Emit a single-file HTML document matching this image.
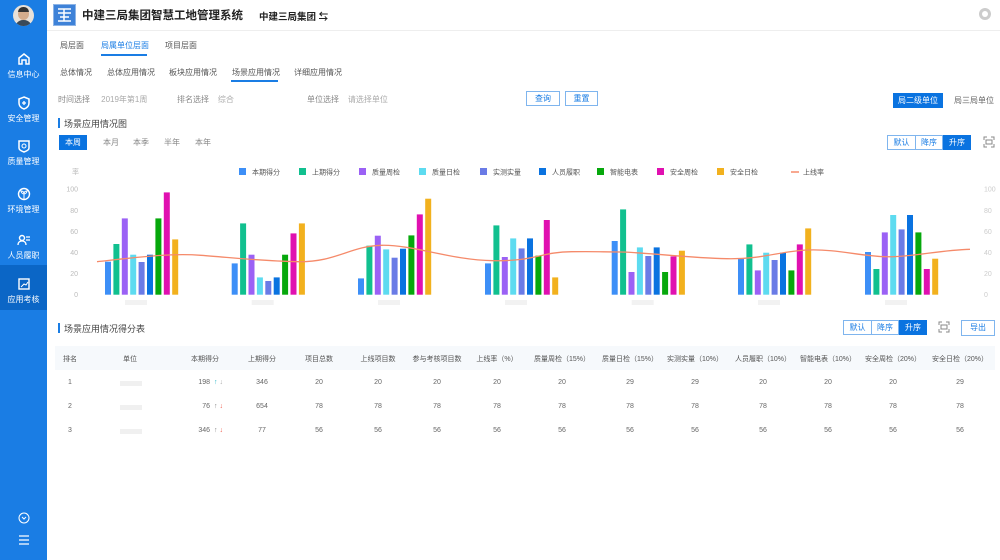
<!DOCTYPE html>
<html><head><meta charset="utf-8"><style>
*{margin:0;padding:0;box-sizing:border-box}
body{width:1000px;height:560px;overflow:hidden;background:#fff;font-family:"Liberation Sans","Noto Sans CJK SC",sans-serif;color:#333;position:relative}
.a{position:absolute;white-space:nowrap}
#side{position:absolute;left:0;top:0;width:47px;height:560px;background:#1a7de4}
.si{position:absolute;left:0;width:47px;text-align:center;color:#fff;font-size:8px}
.si svg{display:block;margin:0 auto 3px}
.t{font-size:8px;color:#555}
.btn{position:absolute;height:15px;border:1px solid #7fb5ee;color:#1a7de4;font-size:8px;text-align:center;line-height:13px;background:#fff}
.on{background:#0a73e0;color:#fff;border-color:#0a73e0}
.h{font-size:7px;color:#555}
.c{font-size:7px;color:#666}
</style></head><body>
<div id="side">
 <div class="a" style="left:13px;top:5px;width:21px;height:21px;border-radius:50%;background:#e8e1d9;overflow:hidden"><div style="position:absolute;left:5px;top:3px;width:11px;height:12px;border-radius:50%;background:#d4ac8c"></div><div style="position:absolute;left:5px;top:2px;width:11px;height:5px;border-radius:5px 5px 0 0;background:#333"></div><div style="position:absolute;left:2px;top:15px;width:17px;height:8px;border-radius:8px 8px 0 0;background:#3a4a5a"></div></div>
 <div class="si" style="top:52px"><svg width="14" height="14" viewBox="0 0 14 14"><path d="M2 6L7 2l5 4v6H9V8H5v4H2z" fill="none" stroke="#fff" stroke-width="1.5"/></svg>信息中心</div>
 <div class="si" style="top:96px"><svg width="14" height="14" viewBox="0 0 14 14"><path d="M7 1l5 2v4c0 3-2 5-5 6-3-1-5-3-5-6V3z" fill="none" stroke="#fff" stroke-width="1.5"/><path d="M7 5v4M5 7h4" stroke="#fff" stroke-width="1.3"/></svg>安全管理</div>
 <div class="si" style="top:139px"><svg width="14" height="14" viewBox="0 0 14 14"><path d="M2 2h10v7c0 2-2 3-5 4-3-1-5-2-5-4z" fill="none" stroke="#fff" stroke-width="1.5"/><circle cx="7" cy="7" r="2" fill="none" stroke="#fff"/></svg>质量管理</div>
 <div class="si" style="top:187px"><svg width="14" height="14" viewBox="0 0 14 14"><circle cx="7" cy="7" r="5.5" fill="none" stroke="#fff" stroke-width="1.4"/><path d="M7 12V6M7 7C5 7 4 5 4 4c2 0 3 1 3 3M7 7c2 0 3-2 3-3-2 0-3 1-3 3" fill="none" stroke="#fff"/></svg>环境管理</div>
 <div class="si" style="top:233px"><svg width="14" height="14" viewBox="0 0 14 14"><circle cx="5" cy="5" r="2.5" fill="none" stroke="#fff" stroke-width="1.4"/><path d="M1 12c0-3 2-4 4-4s4 1 4 4M9 4h4M9 7h4" fill="none" stroke="#fff" stroke-width="1.3"/></svg>人员履职</div>
 <div style="position:absolute;left:0;top:265px;width:47px;height:45px;background:#0b66c6"></div>
 <div class="si" style="top:277px"><svg width="14" height="14" viewBox="0 0 14 14"><rect x="2" y="2" width="10" height="10" fill="none" stroke="#fff" stroke-width="1.4"/><path d="M4 10l3-3 2 1 2-3" fill="none" stroke="#fff"/></svg>应用考核</div>
 <svg class="a" style="left:18px;top:512px" width="12" height="12" viewBox="0 0 12 12"><circle cx="6" cy="6" r="5" fill="none" stroke="#fff"/><path d="M4 5l2 2 2-2" fill="none" stroke="#fff"/></svg>
 <svg class="a" style="left:18px;top:535px" width="12" height="10" viewBox="0 0 12 10"><path d="M1 1h10M1 5h10M1 9h10" stroke="#fff" stroke-width="1.3"/></svg>
</div>
<div class="a" style="left:53px;top:4px;width:23px;height:22px;background:#3e82d8;border:1px solid #8db4e6"><svg width="21" height="20" viewBox="0 0 21 20"><path d="M4 4h13M4 8h13M6 12h9M4 16h13M10 4v12" stroke="#fff" stroke-width="1.5"/></svg></div>
<div class="a" style="left:82px;top:7px;font-size:11.5px;color:#222;font-weight:bold">中建三局集团智慧工地管理系统</div>
<div class="a" style="left:259px;top:9px;font-size:9.5px;color:#222;font-weight:bold">中建三局集团 ⇆</div>
<div class="a" style="left:979px;top:8px;width:12px;height:12px;border-radius:50%;background:#ccc"><div style="margin:3px;width:6px;height:6px;border-radius:50%;background:#fff"></div></div>
<div class="a" style="left:47px;top:30px;width:953px;height:1px;background:#eee"></div>
<div class="a t" style="left:60px;top:40px">局层面</div>
<div class="a t" style="left:101px;top:40px;color:#1a7de4">局属单位层面</div>
<div class="a" style="left:101px;top:54px;width:46px;height:2px;background:#1a7de4"></div>
<div class="a t" style="left:165px;top:40px">项目层面</div>
<div class="a t" style="left:60px;top:67px">总体情况</div>
<div class="a t" style="left:107px;top:67px">总体应用情况</div>
<div class="a t" style="left:169px;top:67px">板块应用情况</div>
<div class="a t" style="left:232px;top:67px">场景应用情况</div>
<div class="a" style="left:231px;top:80px;width:47px;height:2px;background:#1a7de4"></div>
<div class="a t" style="left:294px;top:67px">详细应用情况</div>
<div class="a t" style="left:58px;top:94px;color:#888">时间选择 &nbsp;&nbsp;&nbsp;&nbsp;<span style="color:#aaa">2019年第1周</span></div>
<div class="a t" style="left:177px;top:94px;color:#888">排名选择 &nbsp;&nbsp;&nbsp;<span style="color:#aaa">综合</span></div>
<div class="a t" style="left:307px;top:94px;color:#888">单位选择 &nbsp;&nbsp;&nbsp;<span style="color:#aaa">请选择单位</span></div>
<div class="btn" style="left:526px;top:91px;width:34px">查询</div>
<div class="btn" style="left:565px;top:91px;width:33px">重置</div>
<div class="btn on" style="left:893px;top:93px;width:50px">局二级单位</div>
<div class="a t" style="left:954px;top:95px;color:#666">局三局单位</div>
<div class="a" style="left:58px;top:118px;width:2px;height:10px;background:#1a7de4"></div>
<div class="a" style="left:64px;top:117px;font-size:9px;color:#444">场景应用情况图</div>
<div class="btn on" style="left:59px;top:135px;width:28px">本周</div>
<div class="a t" style="left:103px;top:137px;color:#888">本月</div>
<div class="a t" style="left:133px;top:137px;color:#888">本季</div>
<div class="a t" style="left:164px;top:137px;color:#888">半年</div>
<div class="a t" style="left:195px;top:137px;color:#888">本年</div>
<div class="btn" style="left:887px;top:135px;width:29px">默认</div>
<div class="btn" style="left:915px;top:135px;width:28px">降序</div>
<div class="btn on" style="left:943px;top:135px;width:28px">升序</div>
<svg class="a" style="left:983px;top:136px" width="12" height="12"><path d="M1 4V1h3M8 1h3v3M11 8v3H8M4 11H1V8" fill="none" stroke="#888"/><rect x="3" y="4" width="6" height="4" fill="none" stroke="#888"/></svg>
<svg id="ch" class="a" style="left:0;top:160px" width="1000" height="150"></svg>
<div class="a" style="left:58px;top:323px;width:2px;height:10px;background:#1a7de4"></div>
<div class="a" style="left:64px;top:322px;font-size:9px;color:#444">场景应用情况得分表</div>
<div class="btn" style="left:843px;top:320px;width:29px">默认</div>
<div class="btn" style="left:871px;top:320px;width:28px">降序</div>
<div class="btn on" style="left:899px;top:320px;width:28px">升序</div>
<svg class="a" style="left:938px;top:321px" width="12" height="12"><path d="M1 4V1h3M8 1h3v3M11 8v3H8M4 11H1V8" fill="none" stroke="#888"/><rect x="3" y="4" width="6" height="4" fill="none" stroke="#888"/></svg>
<div class="btn" style="left:961px;top:320px;width:34px;height:16px">导出</div>
<div class="a" style="left:55px;top:346px;width:940px;height:24px;background:#f6f9fc"></div>
<div id="tb"></div>
<script>
var C=["#3d8ff7","#11c08f","#9b61f5","#5ddbf0","#6a7be6","#0a73e0","#06a80c","#e010b0","#f2b11e"];
var G=[[33,50.7,76.3,40,32.7,40,76.3,102.3,55.3],[31.3,71.3,40,17.3,13.7,17.3,40,61.3,71.3],[16.3,49,59,45.3,37,46,59.3,80.3,96],[31.3,69.3,37.7,56.3,46.3,56.3,39,74.7,17.3],[53.7,85.3,22.7,47.3,38.7,47.3,22.7,38.3,44],[35.7,50.3,24.3,42,34.7,42,24.3,50.3,66.3],[42.7,25.7,62.3,79.7,65.3,79.7,62.3,25.7,36]];
var X=[105,231.7,358,485,611.7,738,865];
var s='';var B=134.7;
var names=["本期得分","上期得分","质量周检","质量日检","实测实量","人员履职","智能电表","安全周检","安全日检"];
var lx=[239,299,359,419,480,539,597,657,717];
for(var i=0;i<9;i++){s+='<rect x="'+lx[i]+'" y="8" width="7" height="7" fill="'+C[i]+'"/><text x="'+(lx[i]+13)+'" y="14.5" font-size="7" fill="#555">'+names[i]+'</text>';}
s+='<path d="M791 12h8" stroke="#f58a6a" stroke-width="1.5"/><text x="803" y="14.5" font-size="7" fill="#555">上线率</text>';
var yl=[0,20,40,60,80,100];
for(var k=0;k<6;k++){var y=B-k*21.1;s+='<text x="78" y="'+(y+2.5)+'" font-size="7" fill="#bbb" text-anchor="end">'+yl[k]+'</text><text x="984" y="'+(y+2.5)+'" font-size="7" fill="#ccc">'+yl[k]+'</text>';}
s+='<text x="72" y="14" font-size="7" fill="#bbb">率</text>';
for(var g=0;g<7;g++){for(var i=0;i<9;i++){var h=G[g][i];s+='<rect x="'+(X[g]+i*8.4)+'" y="'+(B-h)+'" width="6" height="'+h+'" fill="'+C[i]+'"/>';}
s+='<rect x="'+(X[g]+20)+'" y="140" width="22" height="5" fill="#f2f2f2"/>';}
s+='<path d="M97 101.7C140 97 170 93 201 95.3S260 101 298 101.7 350 86 381.7 85.3 450 100 493 100.7 540 92 571.7 91.7 600 92 620 92 690 98 726.7 98.7 780 91 808 90 860 96 885 96.7 940 90 970 89.3" fill="none" stroke="#f58a6a" stroke-width="1.3"/>';
document.getElementById('ch').innerHTML=s;
var hx=[70,130,205,262,319,378,437,497,562,630,695,763,828,893,960];
var hd=["排名","单位","本期得分","上期得分","项目总数","上线项目数","参与考核项目数","上线率（%）","质量周检（15%）","质量日检（15%）","实测实量（10%）","人员履职（10%）","智能电表（10%）","安全周检（20%）","安全日检（20%）"];
var rows=[["1","","198","346","20","20","20","20","20","29","29","20","20","20","29"],["2","","76","654","78","78","78","78","78","78","78","78","78","78","78"],["3","","346","77","56","56","56","56","56","56","56","56","56","56","56"]];
var t='';
for(var i=0;i<15;i++)t+='<div class="a h" style="left:'+(hx[i]-40)+'px;width:80px;text-align:center;top:354px">'+hd[i]+'</div>';
for(var r=0;r<3;r++){var y=379+r*24;for(var i=0;i<15;i++){if(i==1){t+='<div class="a" style="left:120px;top:'+(y+2)+'px;width:22px;height:5px;background:#f0f0f0"></div>';continue;}
var v=rows[r][i];var x=hx[i];if(i==2){t+='<div class="a c" style="left:190px;top:'+y+'px;width:20px;text-align:right">'+v+'</div><div class="a c" style="left:214px;top:'+y+'px;color:'+(r?'#888':'#2bb5c8')+'">↑ <span style="color:'+(r?'#f05a4a':'#aaa')+'">↓</span></div>';continue;}
t+='<div class="a c" style="left:'+(x-30)+'px;width:60px;text-align:center;top:'+y+'px">'+v+'</div>';}}
document.getElementById('tb').innerHTML=t;
</script>
</body></html>
